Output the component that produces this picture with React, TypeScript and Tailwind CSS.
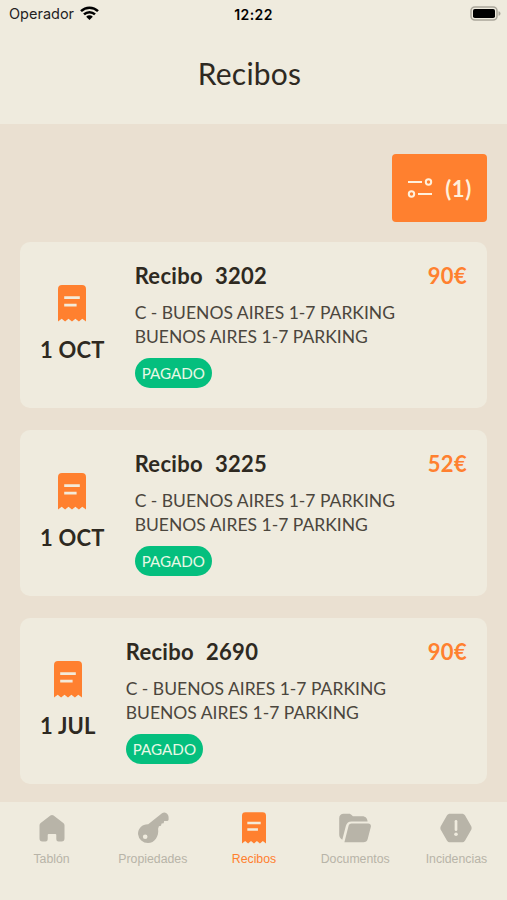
import type { ReactNode } from "react";

type Receipt = { id: string; date: string; price: string; address: string[] };

const address = ["C - BUENOS AIRES 1-7 PARKING", "BUENOS AIRES 1-7 PARKING"];

const receipts: Receipt[] = [
  { id: "3202", date: "1 OCT", price: "90€", address },
  { id: "3225", date: "1 OCT", price: "52€", address },
  { id: "2690", date: "1 JUL", price: "90€", address },
];

function ReceiptIcon({ className }: { className: string }) {
  return (
    <svg viewBox="0 0 28 37" className={className}>
      <path
        fill="#ff802f"
        d="M4 0h20a4 4 0 0 1 4 4v32.5l-3.7-2.8-3.4 2.8-3.5-2.8-3.4 2.8-3.5-2.8-3.4 2.8-3.4-2.8L0 36.5V4a4 4 0 0 1 4-4z"
      />
      <path d="M6.2 12.6h15.6M6.2 20.2h12.4" stroke="#f3ead9" strokeWidth="2.8" />
    </svg>
  );
}

function HomeIcon() {
  return (
    <svg viewBox="0 0 26 28" className="h-7 w-[26px]" fill="#b8b4a8">
      <path d="M11.4 1.5a2.6 2.6 0 0 1 3.2 0l9.7 7.4a3 3 0 0 1 1.2 2.4v13.3a2.9 2.9 0 0 1-2.9 2.9h-3.1a2.2 2.2 0 0 1-2.2-2.2V21a1 1 0 0 0-1-1H9.7a1 1 0 0 0-1 1v4.3a2.2 2.2 0 0 1-2.2 2.2H3.4a2.9 2.9 0 0 1-2.9-2.9V11.3a3 3 0 0 1 1.2-2.4z" />
    </svg>
  );
}

function KeyIcon() {
  return (
    <svg viewBox="0 0 32 32" className="size-8" fill="#b8b4a8">
      <path
        fillRule="evenodd"
        d="M25 1.2c1.4-1 3.2-1 4.500 0 1.600 1.200 2.100 2.700 2.100 4.500v1.900a1.300 1.300 0 0 1-1.300 1.300h-3.200l-.4 2.300-2.100.4-.6 2.200-2.100.5-.8 2.400c1.100 7.600-3.500 14.300-10.100 14.300A10 10 0 0 1 1 22c0-6 4.500-10 10.200-9.800zM8.200 22.400a2.300 2.300 0 1 0 0 4.600 2.300 2.300 0 0 0 0-4.600z"
      />
    </svg>
  );
}

function FolderIcon() {
  return (
    <svg viewBox="0 0 32 30" className="h-[30px] w-8" fill="#b8b4a8">
      <path d="M4.600.8h5.200c1.300 0 2.300.6 3.300 1.600l.8.8h9.500c3 0 5.100 2.200 5.200 5.400H12.500c-3 0-4.700 1.500-5.600 4.200L3.300 26.700C1.300 25.700.2 24 .2 21.600V5.200C.2 2.500 2 .8 4.600.8z" />
      <path d="M12.600 10.600h16.700c1.900 0 3 1.500 2.500 3.300l-3.100 12c-.6 2.200-2 3.300-4.300 3.300H5.400l4-15.800c.5-1.900 1.400-2.800 3.200-2.800z" />
    </svg>
  );
}

function AlertIcon() {
  return (
    <svg viewBox="0 0 32 30" className="h-[30px] w-8">
      <path
        fill="#b8b4a8"
        d="M10.300.7h11.400c1.500 0 2.700.6 3.400 1.900l6 10.300c.7 1.300.7 2.900 0 4.200l-6 10.300c-.7 1.300-1.900 1.900-3.400 1.900H10.300c-1.500 0-2.700-.6-3.400-1.900L.9 17.100c-.7-1.300-.7-2.900 0-4.200l6-10.300C7.600 1.300 8.800.7 10.300.7z"
      />
      <path d="M16 8.300v8.400" stroke="#efebde" strokeWidth="2.700" strokeLinecap="round" />
      <circle cx="16" cy="21.300" r="1.800" fill="#efebde" />
    </svg>
  );
}

function StatusBar() {
  return (
    <div className="grid h-7 grid-cols-3 items-center px-[9px] font-['Inter','Liberation_Sans',sans-serif] text-black">
      <div className="flex items-center gap-1.5">
        <span className="text-[14.5px] text-[#24221e]">Operador</span>
        <svg viewBox="0 0 19 14" className="-mt-0.5 h-3.5 w-[19px]">
          <g fill="none" stroke="#000" strokeWidth="2.5">
            <path d="M1 5.100a12.200 12.200 0 0 1 17 0" />
            <path d="M4 8.400a7.900 7.900 0 0 1 11 0" />
          </g>
          <path d="M6.200 10.700a4.700 4.700 0 0 1 6.600 0L9.500 14z" />
        </svg>
      </div>
      <span className="text-center text-[14px] font-semibold tracking-[0.4px]">12:22</span>
      <svg viewBox="0 0 31 15" className="-mt-0.5 h-[15px] w-[31px] translate-x-[3px] justify-self-end">
        <rect x="1" y="1" width="26" height="13" rx="3.8" fill="none" stroke="#aaa69b" strokeWidth="1.5" />
        <rect x="3" y="3" width="22" height="9" rx="1.8" />
        <path d="M28.500 5.200c1.300.4 2 1.200 2 2.300s-.7 1.900-2 2.300z" fill="#aaa69b" />
      </svg>
    </div>
  );
}

function ReceiptCard({ receipt }: { receipt: Receipt }) {
  return (
    <article className="flex h-[166px] rounded-[10px] bg-[#efebde] px-5">
      <div className="flex shrink-0 flex-col items-center pt-[43px]">
        <ReceiptIcon className="h-[37px] w-7" />
        <span className="mt-3.5 text-[22px] leading-7 font-bold tracking-[0.2px]">{receipt.date}</span>
      </div>
      <div className="ml-[30px] flex-1 pt-5">
        <div className="flex justify-between text-[22px] leading-7 font-bold tracking-[0.3px]">
          <h2 className="flex gap-3">
            <span>Recibo</span>
            <span>{receipt.id}</span>
          </h2>
          <span className="text-[#ff802f]">{receipt.price}</span>
        </div>
        <div className="mt-[11px] text-[17.5px] leading-[23.5px] text-[#4b463d]">
          {receipt.address.map((line) => (
            <p key={line}>{line}</p>
          ))}
        </div>
        <span className="mt-2.5 inline-flex h-[30px] items-center rounded-full bg-[#04bf7e] px-[7px] text-[15.2px] text-[#e7f8e5]">
          PAGADO
        </span>
      </div>
    </article>
  );
}

function Tab({ label, icon, active = false }: { label: string; icon: ReactNode; active?: boolean }) {
  return (
    <button className={`flex flex-col items-center pt-2.5 text-[12.3px] ${active ? "text-[#ff802f]" : "text-[#b8b4a8]"}`}>
      <span className="flex h-8 items-center">{icon}</span>
      <span className="mt-[7px] leading-4">{label}</span>
    </button>
  );
}

export default function App() {
  return (
    <div className="flex h-[900px] w-full flex-col overflow-hidden bg-[#eae0d1] font-['Lato','Noto_Sans',sans-serif] text-[#2e2921]">
      <header className="h-[124px] bg-[#efebde]">
        <StatusBar />
        <h1 className="mt-[25px] pr-2 text-center text-[30px] leading-10 tracking-[0.2px]">Recibos</h1>
      </header>

      <main className="flex flex-1 flex-col px-5">
        <button className="mt-[30px] flex h-[68px] w-[95px] items-center justify-center gap-3 self-end rounded bg-[#ff802f] text-[#fff0dc]">
          <svg viewBox="0 0 26 20" className="h-5 w-[26px]" fill="none" stroke="currentColor" strokeWidth="2">
            <path d="M1 4h14M11 16h14" />
            <circle cx="21.5" cy="4" r="2.7" />
            <circle cx="4.5" cy="16" r="2.7" />
          </svg>
          <span className="text-[22px] font-bold tracking-[0.5px]">(1)</span>
        </button>
        <div className="mt-5 flex flex-col gap-[22px]">
          {receipts.map((receipt) => (
            <ReceiptCard key={receipt.id} receipt={receipt} />
          ))}
        </div>
      </main>

      <nav className="grid h-[98px] grid-cols-5 items-start bg-[#efebde] pl-px font-['Liberation_Sans',Arial,sans-serif]">
        <Tab label="Tablón" icon={<HomeIcon />} />
        <Tab label="Propiedades" icon={<KeyIcon />} />
        <Tab label="Recibos" icon={<ReceiptIcon className="h-8 w-6" />} active />
        <Tab label="Documentos" icon={<FolderIcon />} />
        <Tab label="Incidencias" icon={<AlertIcon />} />
      </nav>
    </div>
  );
}
